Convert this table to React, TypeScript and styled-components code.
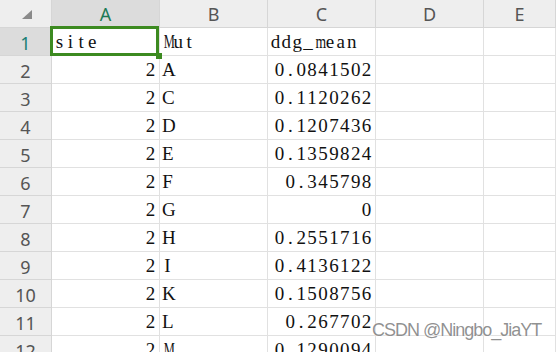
import styled, { createGlobalStyle } from "styled-components";

const rows: [string, string, string][] = [
    ["site", "Mut", "ddg_mean"],
    ["2", "A", "0.0841502"],
    ["2", "C", "0.1120262"],
    ["2", "D", "0.1207436"],
    ["2", "E", "0.1359824"],
    ["2", "F", "0.345798"],
    ["2", "G", "0"],
    ["2", "H", "0.2551716"],
    ["2", "I", "0.4136122"],
    ["2", "K", "0.1508756"],
    ["2", "L", "0.267702"],
    ["2", "M", "0.1290094"],
];

const columns = ["A", "B", "C", "D", "E"];

// squeeze factors for letters wider than one cell pitch
const squeeze: Record<string, number> = {m: 0.72, M: 0.66, w: 0.75, W: 0.62};

// fixed pitch serif text, like the sheet's SimSun cells
function Mono({text}: { text: string }) {
    return <>{text.split("").map((ch, i) => <Glyph key={i} $scale={squeeze[ch] ?? 1}>{ch}</Glyph>)}</>;
}

function App() {
    return (
        <>
            <GlobalStyle/>
            <Sheet>
                <Corner>
                    <svg width="10" height="9" viewBox="0 0 10 9">
                        <polygon points="10,0 10,9 0,9" fill="#8a8a8a"/>
                    </svg>
                </Corner>
                {columns.map((c) => (
                    <ColHeader key={c} $active={c === "A"}>{c}</ColHeader>
                ))}
                {rows.map((r, i) => {
                    const header = i === 0;
                    return [
                        <RowHeader key={`h${i}`} $active={i === 0}>{i + 1}</RowHeader>,
                        <Cell key={`a${i}`} $right={!header}>
                            <Mono text={r[0]}/>
                            {i === 0 && <Selection><Handle/></Selection>}
                        </Cell>,
                        <Cell key={`b${i}`}><Mono text={r[1]}/></Cell>,
                        <Cell key={`c${i}`} $right={!header}><Mono text={r[2]}/></Cell>,
                        <Cell key={`d${i}`}/>,
                        <Cell key={`e${i}`}/>,
                    ];
                })}
            </Sheet>
            <Watermark>CSDN @Ningbo_JiaYT</Watermark>
        </>
    );
}

const GlobalStyle = createGlobalStyle`
    html, body {
        margin: 0;
        padding: 0;
        background: #fff;
        overflow: hidden;
        height: 352px;
    }
`;

const Sheet = styled.div`
    display: grid;
    grid-template-columns: 52px repeat(4, 108px) 1fr;
    grid-auto-rows: 28px;
    width: 556px;
`;

const Corner = styled.div`
    background: #eeeeee;
    border-right: 1px solid #d6d6d6;
    border-bottom: 1px solid #d6d6d6;
    display: flex;
    align-items: flex-start;
    justify-content: flex-end;
    padding: 10px 19px 0 0;
`;

const ColHeader = styled.div<{ $active?: boolean }>`
    background: ${p => p.$active ? "#dcdcdc" : "#eeeeee"};
    color: ${p => p.$active ? "#1d7a55" : "#555555"};
    border-right: 1px solid #d6d6d6;
    border-bottom: 1px solid #d6d6d6;
    font-family: "Noto Sans", "Liberation Sans", sans-serif;
    font-size: 18px;
    display: flex;
    align-items: center;
    justify-content: center;
    padding-top: 1px;
`;

const RowHeader = styled.div<{ $active?: boolean }>`
    background: ${p => p.$active ? "#dcdcdc" : "#eeeeee"};
    color: ${p => p.$active ? "#1a7f74" : "#555555"};
    border-right: 1px solid #d6d6d6;
    border-bottom: 1px solid #d6d6d6;
    font-family: "Noto Sans", "Liberation Sans", sans-serif;
    font-size: 18px;
    display: flex;
    align-items: center;
    justify-content: center;
    padding-top: 2px;
`;

const Cell = styled.div<{ $right?: boolean }>`
    position: relative;
    border-right: 1px solid #e1e1e1;
    border-bottom: 1px solid #e1e1e1;
    font-family: "Liberation Serif", "Times New Roman", serif;
    font-size: 19px;
    color: #111;
    display: flex;
    align-items: flex-end;
    justify-content: ${p => p.$right ? "flex-end" : "flex-start"};
    padding: 0 3px 2px 2px;
    white-space: nowrap;
`;

const Glyph = styled.span<{ $scale: number }>`
    display: inline-block;
    width: 10.9px;
    text-align: center;
    transform: scaleX(${p => p.$scale});
`;

const Selection = styled.div`
    position: absolute;
    z-index: 2;
    top: -2px;
    left: -2px;
    right: 0;
    bottom: -1px;
    border: 3px solid #3c8a20;
`;

const Handle = styled.div`
    position: absolute;
    right: -6px;
    bottom: -6px;
    width: 6px;
    height: 6px;
    background: #3c8a20;
`;

const Watermark = styled.div`
    position: absolute;
    left: 372px;
    top: 320px;
    font-family: "Liberation Sans", Arial, sans-serif;
    font-size: 18px;
    letter-spacing: -1px;
    color: rgba(125, 125, 125, 0.85);
    text-shadow: 0 0 2px #fff;
    white-space: nowrap;
`;

export default App;
